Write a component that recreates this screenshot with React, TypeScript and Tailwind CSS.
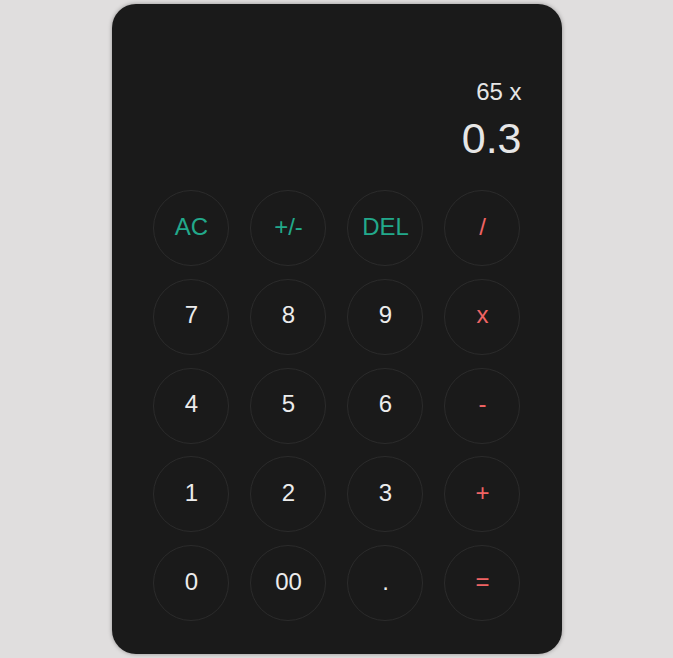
import React from "react";

type Btn = { label: string; kind: "fn" | "op" | "num" };

const buttons: Btn[] = [
  { label: "AC", kind: "fn" },
  { label: "+/-", kind: "fn" },
  { label: "DEL", kind: "fn" },
  { label: "/", kind: "op" },
  { label: "7", kind: "num" },
  { label: "8", kind: "num" },
  { label: "9", kind: "num" },
  { label: "x", kind: "op" },
  { label: "4", kind: "num" },
  { label: "5", kind: "num" },
  { label: "6", kind: "num" },
  { label: "-", kind: "op" },
  { label: "1", kind: "num" },
  { label: "2", kind: "num" },
  { label: "3", kind: "num" },
  { label: "+", kind: "op" },
  { label: "0", kind: "num" },
  { label: "00", kind: "num" },
  { label: ".", kind: "num" },
  { label: "=", kind: "op" },
];

export default function App() {
  return (
    <div
      className="min-h-screen w-full bg-[#e0dede] flex items-center justify-center"
      style={{ fontFamily: '"Liberation Sans", Arial, sans-serif' }}
    >
      <div className="w-[450px] h-[650px] bg-[#1a1a1a] rounded-[24px] shadow-[0_0_4px_rgba(0,0,0,0.35)] flex flex-col justify-end pl-[41px] pr-[42px] pb-[33px]">
        <div className="flex flex-col items-end mb-[28px] mr-[-2px]">
          <div className="text-[24px] leading-[28px] text-[#e6e6e6]">65 x</div>
          <div className="text-[43px] leading-[48px] text-[#e6e6e6] mt-[8px]">0.3</div>
        </div>
        <div className="grid grid-cols-[repeat(4,76px)] gap-x-[21px] gap-y-[12.75px]">
          {buttons.map((b) => (
            <button
              key={b.label}
              className={
                "w-[76px] h-[76px] rounded-full border border-[#2b2b2b] bg-transparent flex items-center justify-center pb-[3px] pl-[2px] text-[24px] " +
                (b.kind === "fn"
                  ? "text-[#22a98b]"
                  : b.kind === "op"
                  ? "text-[#f06464]"
                  : "text-[#ececec]")
              }
            >
              {b.label}
            </button>
          ))}
        </div>
      </div>
    </div>
  );
}
